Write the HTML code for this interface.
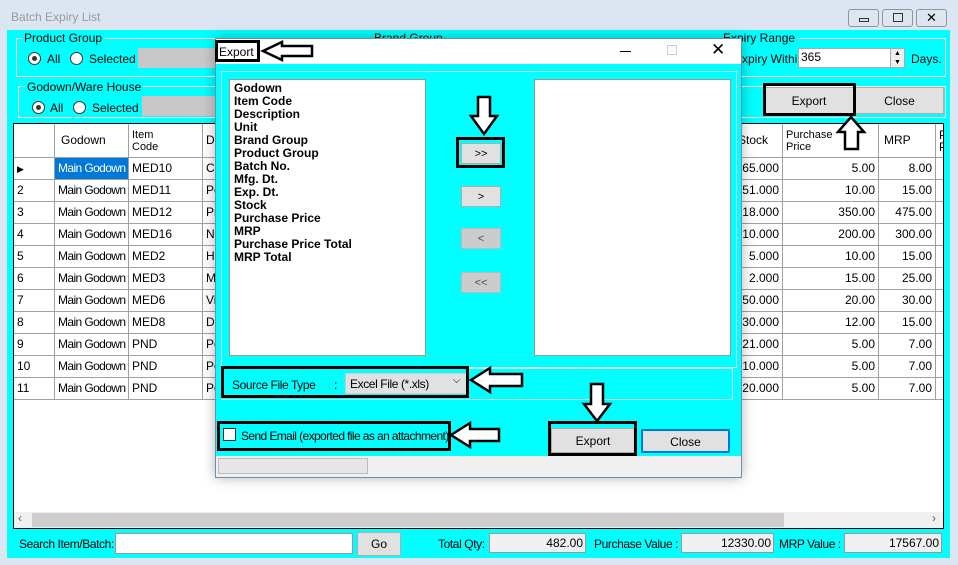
<!DOCTYPE html>
<html><head><meta charset="utf-8"><style>
*{box-sizing:border-box;margin:0;padding:0}
body{width:958px;height:565px;overflow:hidden;background:#dbe6f2;font-family:"Liberation Sans",sans-serif;font-size:12px;color:#000;position:relative}
.a{position:absolute}
.btn{position:absolute;background:#e1e1e1;border:1px solid #adadad;text-align:center}
.cell{position:absolute;border-right:1px solid #a0a0a0;border-bottom:1px solid #a0a0a0;height:22px;line-height:21px;padding:0 3px;white-space:nowrap;overflow:hidden;background:#fff}
.r{text-align:right}
.rad{position:absolute;width:13px;height:13px;border:1px solid #333;border-radius:50%;background:#fff}
.rad.on::after{content:"";position:absolute;left:3px;top:3px;width:5px;height:5px;border-radius:50%;background:#333}
.grp{position:absolute;border:1px solid #fff}
.lbl{position:absolute;background:#0ff;padding:0 2px;font-size:12px}
.box{position:absolute;border:3px solid #000}
.n{letter-spacing:-0.4px}
</style></head><body>
<div class="a" style="left:11px;top:10px;color:#9a9a9a;font-size:12px">Batch Expiry List</div>
<div class="btn" style="left:848px;top:9px;width:31px;height:18px;border-radius:3px;background:#dde6ef;border-color:#8a96a6"><div class="a" style="left:10px;top:8px;width:10px;height:4px;border:1px solid #333"></div></div>
<div class="btn" style="left:882px;top:9px;width:31px;height:18px;border-radius:3px;background:#dde6ef;border-color:#8a96a6"><div class="a" style="left:10px;top:3px;width:10px;height:9px;border:1px solid #333"></div></div>
<div class="btn" style="left:916px;top:9px;width:31px;height:18px;border-radius:3px;background:#dde6ef;border-color:#8a96a6;line-height:15px;font-size:13px">✕</div>

<div class="a" style="left:7px;top:30px;width:943px;height:528px;background:#0ff"></div>
<div class="grp" style="left:16px;top:38px;width:930px;height:39px"></div>
<div class="lbl" style="left:22px;top:31px">Product Group</div>
<div class="rad on" style="left:28px;top:52px"></div><div class="a" style="left:47px;top:52px">All</div>
<div class="rad" style="left:70px;top:52px"></div><div class="a" style="left:89px;top:52px">Selected</div>
<div class="a" style="left:138px;top:48px;width:90px;height:20px;background:#c8c8c8"></div>
<div class="lbl" style="left:372px;top:31px">Brand Group</div>
<div class="lbl" style="left:721px;top:31px">Expiry Range</div>
<div class="a" style="left:734px;top:52px">Expiry Within</div>
<div class="a" style="left:798px;top:48px;width:107px;height:20px;background:#fff;border:1px solid #aaa;padding:1px 2px">365</div>
<div class="a" style="left:890px;top:49px;width:14px;height:18px;background:#eee;border-left:1px solid #aaa;font-size:7px;line-height:9px;text-align:center">▲<br>▼</div>
<div class="a" style="left:911px;top:52px">Days.</div>
<div class="grp" style="left:18px;top:86px;width:928px;height:32px"></div>
<div class="lbl" style="left:25px;top:80px">Godown/Ware House</div>
<div class="rad on" style="left:32px;top:101px"></div><div class="a" style="left:50px;top:101px">All</div>
<div class="rad" style="left:73px;top:101px"></div><div class="a" style="left:92px;top:101px">Selected</div>
<div class="a" style="left:142px;top:96px;width:90px;height:20px;background:#c8c8c8"></div>
<div class="btn" style="left:764px;top:87px;width:90px;height:27px;line-height:26px">Export</div>
<div class="btn" style="left:855px;top:87px;width:89px;height:27px;line-height:26px">Close</div>
<div class="box" style="left:763px;top:83px;width:93px;height:33px"></div>

<div class="a" style="left:13px;top:123px;width:931px;height:406px;background:#fff;border:1px solid #000;overflow:hidden">
<div class="cell" style="left:0;top:0;width:41px;height:34px"></div>
<div class="cell" style="left:41px;top:0;width:74px;height:34px;line-height:33px;padding-left:6px">Godown</div>
<div class="cell" style="left:115px;top:0;width:74px;height:34px;line-height:12px;padding-top:5px;font-size:11px">Item<br>Code</div>
<div class="cell" style="left:189px;top:0;width:580px;height:34px;line-height:33px">D</div>
<div class="cell" style="left:700px;top:0;width:69px;height:34px;line-height:33px;text-align:right;padding-right:14px">Stock</div>
<div class="cell" style="left:769px;top:0;width:96px;height:34px;line-height:12px;padding-top:5px;font-size:11px">Purchase<br>Price</div>
<div class="cell" style="left:865px;top:0;width:57px;height:34px;line-height:33px;padding-left:5px">MRP</div>
<div class="cell" style="left:922px;top:0;width:20px;height:34px;line-height:12px;padding-top:5px">P<br>P</div>
</div>
<div id="rows"></div>
<div class="a" style="left:14px;top:512px;width:929px;height:16px;background:#f0f0f0"></div>
<div class="a" style="left:32px;top:513px;width:752px;height:14px;background:#cdcdcd"></div>
<div class="a" style="left:18px;top:511px;color:#606060">‹</div>
<div class="a" style="left:932px;top:511px;color:#606060">›</div>

<div class="a n" style="left:19px;top:537px">Search Item/Batch:</div>
<div class="a" style="left:115px;top:533px;width:238px;height:21px;background:#fff;border:1px solid #999"></div>
<div class="btn" style="left:357px;top:532px;width:44px;height:24px;line-height:23px">Go</div>
<div class="a n" style="left:438px;top:537px">Total Qty:</div>
<div class="a" style="left:489px;top:533px;width:97px;height:20px;background:#f0f0f0;border:1px solid #999;text-align:right;padding:2px 2px">482.00</div>
<div class="a n" style="left:594px;top:537px">Purchase Value :</div>
<div class="a" style="left:681px;top:533px;width:93px;height:20px;background:#f0f0f0;border:1px solid #999;text-align:right;padding:2px 2px">12330.00</div>
<div class="a n" style="left:779px;top:537px">MRP Value :</div>
<div class="a" style="left:844px;top:533px;width:98px;height:20px;background:#f0f0f0;border:1px solid #999;text-align:right;padding:2px 2px">17567.00</div>

<div class="a" style="left:215px;top:38px;width:527px;height:440px;background:#0ff;border:1px solid #6a8fb5;box-shadow:0 0 12px rgba(0,0,0,.3)">
<div class="a" style="left:0;top:0;width:525px;height:25px;background:#fff"></div>
<div class="a" style="left:3px;top:6px">Export</div>
<div class="a" style="left:404px;top:12px;width:11px;height:1px;background:#000"></div>
<div class="a" style="left:451px;top:6px;width:10px;height:10px;border:1px solid #ccc"></div>
<div class="a" style="left:495px;top:1px;font-size:17px">✕</div>
<div class="a" style="left:5px;top:32px;width:516px;height:297px;border:1px solid #c8e8e8"></div>
<div class="a" style="left:13px;top:40px;width:197px;height:277px;background:#fff;border:1px solid #999;padding:2px 4px;font-weight:bold;line-height:13px">Godown<br>Item Code<br>Description<br>Unit<br>Brand Group<br>Product Group<br>Batch No.<br>Mfg. Dt.<br>Exp. Dt.<br>Stock<br>Purchase Price<br>MRP<br>Purchase Price Total<br>MRP Total</div>
<div class="a" style="left:318px;top:40px;width:197px;height:277px;background:#fff;border:1px solid #999"></div>
<div class="btn" style="left:245px;top:104px;width:40px;height:21px;line-height:20px;font-size:11px">&gt;&gt;</div>
<div class="btn" style="left:245px;top:147px;width:40px;height:21px;line-height:20px;font-size:11px">&gt;</div>
<div class="btn" style="left:245px;top:189px;width:40px;height:21px;line-height:20px;font-size:11px;background:#ccc;border-color:#bbb;color:#356">&lt;</div>
<div class="btn" style="left:245px;top:233px;width:40px;height:21px;line-height:20px;font-size:11px;background:#ccc;border-color:#bbb;color:#356">&lt;&lt;</div>
<div class="a" style="left:5px;top:329px;width:512px;height:32px;border:1px solid #c8e8e8"></div>
<div class="a n" style="left:16px;top:339px">Source File Type</div>
<div class="a" style="left:118px;top:339px">:</div>
<div class="a n" style="left:129px;top:334px;width:122px;height:21px;background:#e1e1e1;border:1px solid #ccc;padding:3px 4px">Excel File (*.xls)<span style="position:absolute;right:6px;top:1px;font-size:10px">⌵</span></div>
<div class="a" style="left:7px;top:389px;width:13px;height:13px;background:#fff;border:1px solid #333"></div>
<div class="a" style="left:25px;top:390px;letter-spacing:-0.6px;white-space:nowrap">Send Email (exported file as an attachment)</div>
<div class="btn" style="left:335px;top:389px;width:84px;height:25px;line-height:24px">Export</div>
<div class="btn" style="left:425px;top:390px;width:89px;height:24px;line-height:22px;border:2px solid #0078d7">Close</div>
<div class="a" style="left:0;top:417px;width:525px;height:21px;background:#f0f0f0"></div>
<div class="a" style="left:2px;top:419px;width:150px;height:16px;background:#e6e6e6;border:1px solid #bcbcbc"></div>
</div>
<div class="box" style="left:215px;top:40px;width:45px;height:22px"></div>
<div class="box" style="left:456px;top:137px;width:49px;height:31px"></div>
<div class="box" style="left:221px;top:366px;width:248px;height:32px"></div>
<div class="box" style="left:217px;top:421px;width:234px;height:30px"></div>
<div class="box" style="left:548px;top:421px;width:89px;height:35px"></div>
<svg class="a" style="left:0;top:0" width="958" height="565" fill="#fff" stroke="#000" stroke-width="2.5">
<polygon points="263,51 282,42 282,46 312,46 312,56 282,56 282,60"/>
<polygon points="478,97 490,97 490,116 497,116 484,134 471,116 478,116"/>
<polygon points="851,117 864,132 858,132 858,149 845,149 845,132 838,132"/>
<polygon points="471,380 490,368 490,374 522,374 522,386 490,386 490,392"/>
<polygon points="451,435 470,423 470,429 499,429 499,441 470,441 470,447"/>
<polygon points="591,384 603,384 603,404 610,404 597,421 584,404 591,404"/>
</svg>
<script>
var d=[["Main Godown","MED10","Ce","65.000","5.00","8.00"],["Main Godown","MED11","Pe","51.000","10.00","15.00"],["Main Godown","MED12","Pr","18.000","350.00","475.00"],["Main Godown","MED16","N","10.000","200.00","300.00"],["Main Godown","MED2","Ha","5.000","10.00","15.00"],["Main Godown","MED3","Ma","2.000","15.00","25.00"],["Main Godown","MED6","Vi","50.000","20.00","30.00"],["Main Godown","MED8","Di","30.000","12.00","15.00"],["Main Godown","PND","Pe","21.000","5.00","7.00"],["Main Godown","PND","Pe","10.000","5.00","7.00"],["Main Godown","PND","Pe","20.000","5.00","7.00"]];
var h="";d.forEach(function(r,i){var y=158+i*22,L=14;
h+='<div class="cell" style="left:'+L+'px;top:'+y+'px;width:41px">'+(i==0?'<span style="font-size:9px">▶</span>':(i+1))+'</div>';
h+='<div class="cell" style="left:55px;top:'+y+'px;width:74px;letter-spacing:-0.6px;'+(i==0?'background:#0078d7;color:#fff':'')+'">'+r[0]+'</div>';
h+='<div class="cell" style="left:129px;top:'+y+'px;width:74px">'+r[1]+'</div>';
h+='<div class="cell" style="left:203px;top:'+y+'px;width:580px">'+r[2]+'</div>';
h+='<div class="cell r" style="left:714px;top:'+y+'px;width:69px">'+r[3]+'</div>';
h+='<div class="cell r" style="left:783px;top:'+y+'px;width:96px">'+r[4]+'</div>';
h+='<div class="cell r" style="left:879px;top:'+y+'px;width:57px">'+r[5]+'</div>';
h+='<div class="cell" style="left:936px;top:'+y+'px;width:7px;border-right:none"></div>';});
document.getElementById("rows").innerHTML=h;
</script>
</body></html>
